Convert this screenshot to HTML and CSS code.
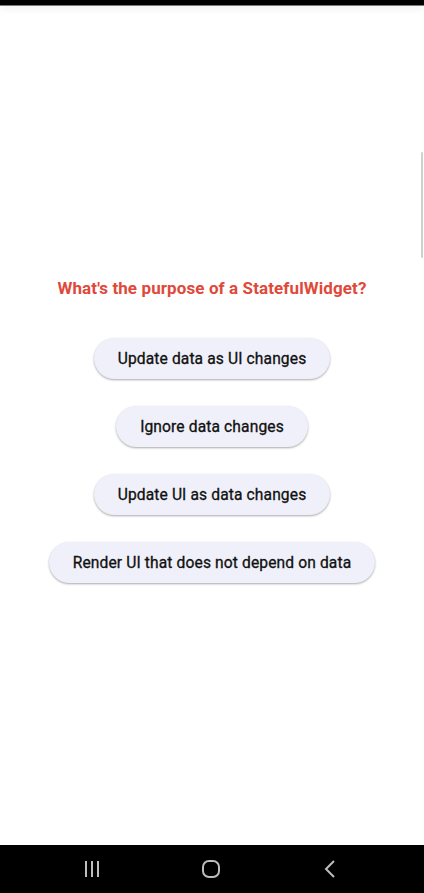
FILE: index.html
```html
<!DOCTYPE html>
<html>
<head>
<meta charset="utf-8">
<link rel="stylesheet" href="styles.css">
</head>
<body>
<div class="screen">
  <div class="statusbar"></div>
  <main class="content">
    <div class="scroll-indicator"></div>
    <h1 class="question">What's the purpose of a StatefulWidget?</h1>
    <div class="answers">
      <button class="answer">Update data as UI changes</button>
      <button class="answer">Ignore data changes</button>
      <button class="answer">Update UI as data changes</button>
      <button class="answer">Render UI that does not depend on data</button>
    </div>
  </main>
  <nav class="navbar">
    <svg class="nav-icon" width="20" height="18" viewBox="0 0 20 18"><g fill="#bdbdbd"><rect x="3" y="1" width="2" height="16"/><rect x="9" y="1" width="2" height="16"/><rect x="15" y="1" width="2" height="16"/></g></svg>
    <svg class="nav-icon" width="20" height="20" viewBox="0 0 20 20"><rect x="2" y="2" width="16" height="16" rx="6" fill="none" stroke="#bdbdbd" stroke-width="2"/></svg>
    <svg class="nav-icon" width="20" height="20" viewBox="0 0 20 20"><path d="M14 2 L6 10 L14 18" fill="none" stroke="#bdbdbd" stroke-width="2" stroke-linejoin="miter"/></svg>
  </nav>
</div>
</body>
</html>
```
FILE: styles.css
```css
* { box-sizing: border-box; }
html, body { margin: 0; padding: 0; }
body {
  width: 424px;
  height: 893px;
  overflow: hidden;
  background: #fff;
  font-family: Roboto, "Noto Sans", sans-serif;
}
.screen {
  display: flex;
  flex-direction: column;
  height: 893px;
}
.statusbar {
  height: 6px;
  background: #000;
  border-bottom: 1px solid #7a7a7a;
  box-shadow: 0 2px 8px rgba(0,0,0,0.08);
  position: relative;
  z-index: 1;
}
.content {
  flex: 1;
  position: relative;
  display: flex;
  flex-direction: column;
  align-items: center;
  padding-top: 272px;
}
.scroll-indicator {
  position: absolute;
  right: 1px;
  top: 146px;
  width: 2px;
  height: 106px;
  background: #d0d0d0;
  border-radius: 1px;
}
.question {
  margin: 0;
  font-size: 17px;
  font-weight: 700;
  color: #e0493a;
  line-height: 20px;
  letter-spacing: 0.1px;
}
.answers {
  margin-top: 40px;
  display: flex;
  flex-direction: column;
  align-items: center;
  gap: 27px;
}
.answer {
  height: 41px;
  padding: 0 24px;
  border: none;
  border-radius: 21px;
  background: #eff0f9;
  color: #111;
  font-family: Roboto, "Noto Sans", sans-serif;
  font-size: 15.6px;
  font-weight: 400;
  letter-spacing: 0.12px;
  -webkit-text-stroke: 0.3px #111;
  box-shadow: 0 1px 2px rgba(0,0,0,0.25), 0 1px 3px rgba(0,0,0,0.1);
}
.navbar {
  height: 48px;
  background: #000;
  display: flex;
  align-items: center;
  gap: 99px;
  padding-left: 82px;
}
.nav-icon { display: block; }
```
